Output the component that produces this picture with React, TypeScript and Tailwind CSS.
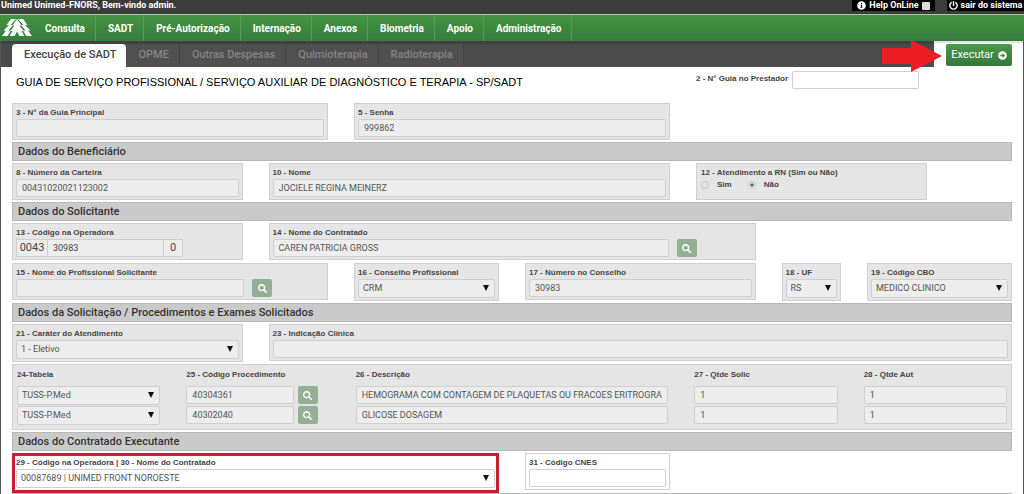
import type { ReactNode } from "react";
import { FaArrowAltCircleRight, FaInfoCircle, FaPowerOff, FaSearch } from "react-icons/fa";

const menu = ["Consulta", "SADT", "Pré-Autorização", "Internação", "Anexos", "Biometria", "Apoio", "Administração"];
const tabs = ["OPME", "Outras Despesas", "Quimioterapia", "Radioterapia"];

const procedures = [
  { code: "40304361", description: "HEMOGRAMA COM CONTAGEM DE PLAQUETAS OU FRACOES ERITROGRAMA", requested: "1", authorized: "1" },
  { code: "40302040", description: "GLICOSE DOSAGEM", requested: "1", authorized: "1" },
];

const control = "block h-[18px] w-full min-w-0 rounded-xs border border-[#cfcfcf] bg-[#ededed] px-[5px] text-[9px] text-[#555]";
const whiteControl = "block h-[18px] w-full min-w-0 rounded-xs border border-[#cfcfcf] bg-white px-[5px] text-[9px] text-[#555]";
const select = "block h-[19px] w-full min-w-0 appearance-none rounded-xs border border-[#cfcfcf] bg-[#ededed] px-1 text-[9px] text-[#555]";
const whiteSelect = "block h-[19px] w-full min-w-0 appearance-none rounded-xs border border-[#cfcfcf] bg-white px-1 text-[9px] text-[#555]";

function Box({ className, children }: { className: string; children: ReactNode }) {
  return (
    <div className={`flex flex-col border border-[#d0d0d0] bg-[#e5e5e5] px-[3px] pt-[3px] pb-0.5 ${className}`}>
      {children}
    </div>
  );
}

function Label({ htmlFor, children }: { htmlFor: string; children: ReactNode }) {
  return (
    <label htmlFor={htmlFor} className="block h-3 font-['Liberation_Sans',sans-serif] text-[8px] leading-3 font-bold whitespace-nowrap text-[#444]">
      {children}
    </label>
  );
}

function Select({ id, value, label, white }: { id: string; value: string; label?: string; white?: boolean }) {
  return (
    <div className="relative">
      <select id={id} aria-label={label} className={white ? whiteSelect : select}>
        <option>{value}</option>
      </select>
      <svg viewBox="0 0 6 6" className="pointer-events-none absolute top-1.5 right-1.5 size-1.5">
        <path d="M0 0h6L3 6z" fill="#111" />
      </svg>
    </div>
  );
}

function SearchButton({ label }: { label: string }) {
  return (
    <button type="button" aria-label={label} className="flex h-[18px] w-5 shrink-0 items-center justify-center rounded-xs bg-[#94b094] text-white">
      <FaSearch className="size-[9px]" />
    </button>
  );
}

function Section({ children }: { children: ReactNode }) {
  return (
    <h2 className="my-0.5 h-[19px] border border-[#b8b8b8] bg-[#cacaca] px-[5px] text-[11px] leading-[17px] font-medium text-[#333]">
      {children}
    </h2>
  );
}

function Row({ className = "", children }: { className?: string; children: ReactNode }) {
  return <div className={`grid grid-cols-12 gap-x-[26px] ${className}`}>{children}</div>;
}

export default function App() {
  return (
    <div className="min-h-screen bg-white font-['Roboto','Liberation_Sans',sans-serif]">
      {/* Top bar */}
      <div className="flex h-3.5 items-start justify-between bg-[#3b3b3b] text-[9px] leading-[11px] font-bold text-white">
        <p className="pl-px">Unimed Unimed-FNORS, Bem-vindo admin.</p>
        <div className="flex gap-3">
          <a href="#help" className="flex h-[11px] w-[83px] items-center justify-center gap-[3px] bg-black">
            <FaInfoCircle className="size-[9px]" />
            <span>Help OnLine</span>
            <span className="size-2 rounded-[1px] bg-[#ddd]" />
          </a>
          <a href="#sair" className="flex h-[11px] w-[77px] items-center justify-center gap-[3px] bg-black">
            <FaPowerOff className="size-[9px]" />
            <span>sair do sistema</span>
          </a>
        </div>
      </div>

      {/* Main menu */}
      <nav className="flex h-[27px] border-t border-[#a5cfa5] bg-linear-to-b from-[#45933f] to-[#387c3e]">
        <a href="#inicio" aria-label="Início" className="flex w-[33px] items-center pl-0.5">
          <svg viewBox="0 0 30 18" className="h-[18px] w-[30px]" fill="white">
            <path d="M9 0h5L8.500 6h2.500L6.500 11.500h2.500L5.500 17H0l4-5.500H1.500L7 6H4.500zM21 0h-5l5.500 6H19l4.500 5.500H21l3.500 5.500H30l-4-5.500h2.500L23 6h2.500z" />
            <path d="M15 0l4.500 6.500h-2l4 5.500h-2l3 5h-5L15 12.500 12.500 17h-5l3-5h-2l4-5.500h-2z" />
          </svg>
        </a>
        {menu.map((item) => (
          <a key={item} href="#menu" className="flex items-center border-r border-[#559c55] pr-2.5 pl-3 text-[10px] font-bold text-white">
            {item}
          </a>
        ))}
      </nav>

      <div className="border-x border-[#555]">
        {/* Tabs and the run button */}
        <div className="flex h-[26px]">
          <div className="flex flex-1 items-end border-t-[3px] border-[#414141] bg-[#4b4b4b] pl-[11px] text-[11px] font-medium">
            <a href="#execucao" className="flex h-[23px] items-center rounded-t-sm bg-white pr-2.5 pl-3 text-[#444]">Execução de SADT</a>
            {tabs.map((tab) => (
              <a key={tab} href="#tab" className="flex h-[23px] items-center border-r border-[#444] bg-[#505050] pr-2.5 pl-3 text-[#868686]">
                {tab}
              </a>
            ))}
          </div>
          <div className="relative w-[89px] border-t-2 border-[#dce8dc] pt-px pl-3">
            <button type="button" className="flex h-[22px] w-[66px] items-center justify-center gap-1 rounded-xs bg-linear-to-b from-[#48994b] to-[#36783b] text-[11px] text-white">
              Executar
              <FaArrowAltCircleRight className="size-[9px]" />
            </button>
            <svg viewBox="0 0 60 32" className="absolute -top-[3px] -left-[52px] h-8 w-[60px]">
              <path d="M0 8h29V0l31 16-31 16v-8H0z" fill="#ee1c25" />
            </svg>
          </div>
        </div>

        <form className="px-[11px]">
          <Row className="h-9">
            <h1 className="col-span-8 pt-[7px] pl-1 font-['Liberation_Sans',sans-serif] text-[11px] leading-4 whitespace-nowrap text-black">
              GUIA DE SERVIÇO PROFISSIONAL / SERVIÇO AUXILIAR DE DIAGNÓSTICO E TERAPIA - SP/SADT
            </h1>
            <div className="col-span-4 flex items-start gap-1 pt-1">
              <div className="pt-0.5"><Label htmlFor="f2">2 - N° Guia no Prestador</Label></div>
              <div className="w-[127px]"><input id="f2" className={whiteControl} /></div>
            </div>
          </Row>

          <Row>
            <Box className="col-span-4">
              <Label htmlFor="f3">3 - N° da Guia Principal</Label>
              <input id="f3" className={control} />
            </Box>
            <Box className="col-span-4">
              <Label htmlFor="f5">5 - Senha</Label>
              <input id="f5" defaultValue="999862" className={control} />
            </Box>
          </Row>

          <Section>Dados do Beneficiário</Section>
          <Row>
            <Box className="col-span-3">
              <Label htmlFor="f8">8 - Número da Carteira</Label>
              <input id="f8" defaultValue="00431020021123002" className={control} />
            </Box>
            <Box className="col-span-5">
              <Label htmlFor="f10">10 - Nome</Label>
              <input id="f10" defaultValue="JOCIELE REGINA MEINERZ" className={control} />
            </Box>
            <fieldset className="col-span-3 border border-[#d0d0d0] bg-[#e5e5e5] px-1 pt-[3px] font-['Liberation_Sans',sans-serif] text-[8px] font-bold text-[#444]">
              <legend className="float-left w-full leading-3">12 - Atendimento a RN (Sim ou Não)</legend>
              <div className="clear-both flex items-center gap-4 leading-3">
                <label className="flex items-center gap-2">
                  <input type="radio" name="rn" className="size-2 appearance-none rounded-full border border-[#c4c4c4]" />
                  Sim
                </label>
                <label className="flex items-center gap-2">
                  <input type="radio" name="rn" defaultChecked className="size-2 appearance-none rounded-full border border-[#c4c4c4] bg-radial from-[#666] from-30% to-[#eee] to-50%" />
                  Não
                </label>
              </div>
            </fieldset>
          </Row>

          <Section>Dados do Solicitante</Section>
          <Row>
            <Box className="col-span-3">
              <Label htmlFor="f13">13 - Código na Operadora</Label>
              <div className="flex w-[167px] text-[11px] leading-4 text-[#444]">
                <span className="h-[18px] w-8 border border-[#cfcfcf] bg-[#ededed] text-center">0043</span>
                <input id="f13" defaultValue="30983" className="h-[18px] min-w-0 flex-1 border-y border-[#cfcfcf] bg-[#ededed] px-[5px] text-[9px]" />
                <span className="h-[18px] w-5 border border-[#cfcfcf] bg-[#ededed] text-center">0</span>
              </div>
            </Box>
            <Box className="col-span-6">
              <Label htmlFor="f14">14 - Nome do Contratado</Label>
              <div className="flex gap-2 pr-[55px]">
                <input id="f14" defaultValue="CAREN PATRICIA GROSS" className={control} />
                <SearchButton label="Buscar contratado" />
              </div>
            </Box>
          </Row>
          <Row className="mt-[3px] items-start">
            <Box className="col-span-4">
              <Label htmlFor="f15">15 - Nome do Profissional Solicitante</Label>
              <div className="flex gap-2 pr-[52px]">
                <input id="f15" className={control} />
                <SearchButton label="Buscar profissional" />
              </div>
            </Box>
            <Box className="col-span-2">
              <Label htmlFor="f16">16 - Conselho Profissional</Label>
              <Select id="f16" value="CRM" />
            </Box>
            <Box className="col-span-3">
              <Label htmlFor="f17">17 - Número no Conselho</Label>
              <input id="f17" defaultValue="30983" className={control} />
            </Box>
            <Box className="col-span-1">
              <Label htmlFor="f18">18 - UF</Label>
              <Select id="f18" value="RS" />
            </Box>
            <Box className="col-span-2">
              <Label htmlFor="f19">19 - Código CBO</Label>
              <Select id="f19" value="MEDICO CLINICO" />
            </Box>
          </Row>

          <Section>Dados da Solicitação / Procedimentos e Exames Solicitados</Section>
          <Row className="items-start">
            <Box className="col-span-3">
              <Label htmlFor="f21">21 - Caráter do Atendimento</Label>
              <Select id="f21" value="1 - Eletivo" />
            </Box>
            <Box className="col-span-9">
              <Label htmlFor="f23">23 - Indicação Clínica</Label>
              <input id="f23" className={control} />
            </Box>
          </Row>

          {/* Procedures */}
          <div className="mt-0.5 border border-[#d0d0d0] bg-[#e5e5e5] p-1">
            <Row className="mb-[5px]">
              <div className="col-span-2"><Label htmlFor="tabela-0">24-Tabela</Label></div>
              <div className="col-span-2"><Label htmlFor="codigo-0">25 - Código Procedimento</Label></div>
              <div className="col-span-4"><Label htmlFor="descricao-0">26 - Descrição</Label></div>
              <div className="col-span-2"><Label htmlFor="solic-0">27 - Qtde Solic</Label></div>
              <div className="col-span-2"><Label htmlFor="aut-0">28 - Qtde Aut</Label></div>
            </Row>
            <div className="flex flex-col gap-px">
              {procedures.map((item, i) => (
                <Row key={item.code}>
                  <div className="col-span-2"><Select id={`tabela-${i}`} label="Tabela" value="TUSS-P.Med" /></div>
                  <div className="col-span-2 flex gap-1 pr-3">
                    <input id={`codigo-${i}`} aria-label="Código Procedimento" defaultValue={item.code} className={control} />
                    <SearchButton label="Buscar procedimento" />
                  </div>
                  <div className="col-span-4"><input id={`descricao-${i}`} aria-label="Descrição" defaultValue={item.description} className={control} /></div>
                  <div className="col-span-2"><input id={`solic-${i}`} aria-label="Qtde Solic" defaultValue={item.requested} className={control} /></div>
                  <div className="col-span-2"><input id={`aut-${i}`} aria-label="Qtde Aut" defaultValue={item.authorized} className={control} /></div>
                </Row>
              ))}
            </div>
          </div>

          <Section>Dados do Contratado Executante</Section>
          <Row className="items-start">
            <div className="col-span-6 border-[3px] border-[#c4202f] px-px pt-px pb-0.5">
              <Label htmlFor="f29">29 - Código na Operadora | 30 - Nome do Contratado</Label>
              <Select id="f29" value="00087689 | UNIMED FRONT NOROESTE" white />
            </div>
            <div className="col-span-2 border border-[#d0d0d0] px-[3px] pt-[3px] pb-0.5">
              <Label htmlFor="f31">31 - Código CNES</Label>
              <input id="f31" className={whiteControl} />
            </div>
          </Row>
          <div className="border-t border-[#bbb]" />
        </form>
      </div>
    </div>
  );
}
